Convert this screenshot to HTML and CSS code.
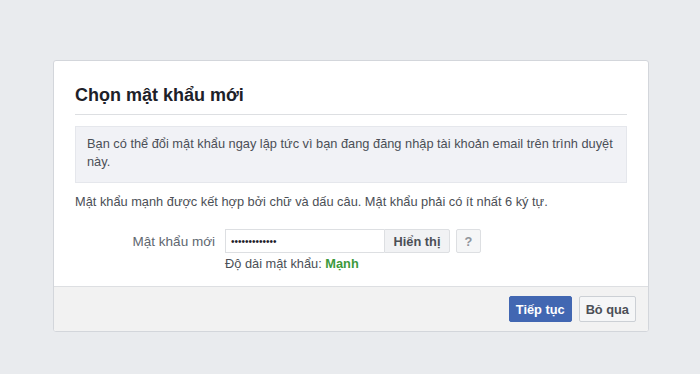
FILE: index.html
```html
<!DOCTYPE html>
<html lang="vi">
<head>
    <meta charset="UTF-8">
    <meta name="viewport" content="width=device-width, initial-scale=1.0">
    <title>Chọn mật khẩu mới</title>
    <link rel="stylesheet" href="styles.css">
</head>
<body>
<form class="reset-card" action="#" method="post">
    <div class="reset-body">
        <h2 class="reset-title">Chọn mật khẩu mới</h2>
        <div class="notice">
            Bạn có thể đổi mật khẩu ngay lập tức vì bạn đang đăng nhập tài khoản email trên trình duyệt này.
        </div>
        <p class="hint">Mật khẩu mạnh được kết hợp bởi chữ và dấu câu. Mật khẩu phải có ít nhất 6 ký tự.</p>
        <div class="field-row">
            <label class="field-label" for="newPassword">Mật khẩu mới</label>
            <div class="field-controls">
                <div class="input-group">
                    <input type="password" id="newPassword" class="pw-input" value="abcdefghijklm">
                    <button type="button" class="btn btn-addon">Hiển thị</button>
                </div>
                <button type="button" class="btn btn-help">?</button>
            </div>
        </div>
        <div class="strength">Độ dài mật khẩu: <span class="strong">Mạnh</span></div>
    </div>
    <div class="reset-footer">
        <button type="submit" class="btn btn-primary">Tiếp tục</button>
        <button type="button" class="btn btn-default">Bỏ qua</button>
    </div>
</form>
</body>
</html>
```

FILE: styles.css
```css
body {
    margin: 0;
    padding: 60px 51px 0 53px;
    background-color: #e9ebee;
    font-family: 'Liberation Sans', Arial, sans-serif;
    font-size: 12.8px;
    color: #1d2129;
}

.reset-card {
    background-color: #fff;
    border: 1px solid #d3d6db;
    border-radius: 3px;
    overflow: hidden;
}

.reset-body {
    padding: 0 21px 15px 21px;
}

.reset-title {
    margin: 0;
    padding: 23px 0 8px;
    border-bottom: 1px solid #dddfe2;
    font-size: 18px;
    line-height: 22px;
    font-weight: bold;
    color: #1d2129;
}

.notice {
    margin-top: 11px;
    padding: 8px 11px 11px;
    background-color: #f1f2f6;
    border: 1px solid #e5e7ec;
    line-height: 18px;
    color: #4b4f56;
}

.hint {
    margin: 11px 0 0;
    line-height: 16px;
    color: #4b4f56;
}

.field-row {
    display: flex;
    align-items: center;
    margin-top: 19px;
}

.field-label {
    width: 140px;
    padding-right: 10px;
    text-align: right;
    font-size: 13.5px;
    color: #606770;
}

.field-controls {
    display: flex;
    align-items: center;
    gap: 6px;
}

.input-group {
    display: flex;
}

.pw-input {
    width: 148px;
    height: 22px;
    padding: 0 5px;
    margin: 0;
    border: 1px solid #dddfe2;
    border-right: none;
    font-family: inherit;
    font-size: 10px;
    color: #1d2129;
    outline: none;
}

.btn {
    margin: 0;
    height: 24px;
    border: 1px solid #ccd0d5;
    border-radius: 2px;
    font-family: inherit;
    font-size: 12.8px;
    font-weight: bold;
    cursor: pointer;
}

.btn-addon {
    width: 66px;
    padding: 0;
    background-color: #f1f2f4;
    border-color: #dddfe2;
    border-radius: 0 2px 2px 0;
    color: #4b4f56;
}

.btn-help {
    width: 25px;
    padding: 0;
    background-color: #f5f6f7;
    border-color: #dddfe2;
    color: #90949c;
}

.strength {
    margin: 4px 0 0 150px;
    line-height: 14px;
    color: #4b4f56;
}

.strong {
    color: #3c9a3c;
    font-weight: bold;
}

.reset-footer {
    display: flex;
    justify-content: flex-end;
    gap: 7px;
    padding: 9px 12px 9px;
    background-color: #f2f2f2;
    border-top: 1px solid #dddfe2;
}

.btn-primary {
    height: 26px;
    padding: 0 6px;
    background-color: #4267b2;
    border-color: #4267b2;
    color: #fff;
}

.btn-default {
    height: 26px;
    padding: 0 6px;
    background-color: #f5f6f7;
    color: #4b4f56;
}
```
